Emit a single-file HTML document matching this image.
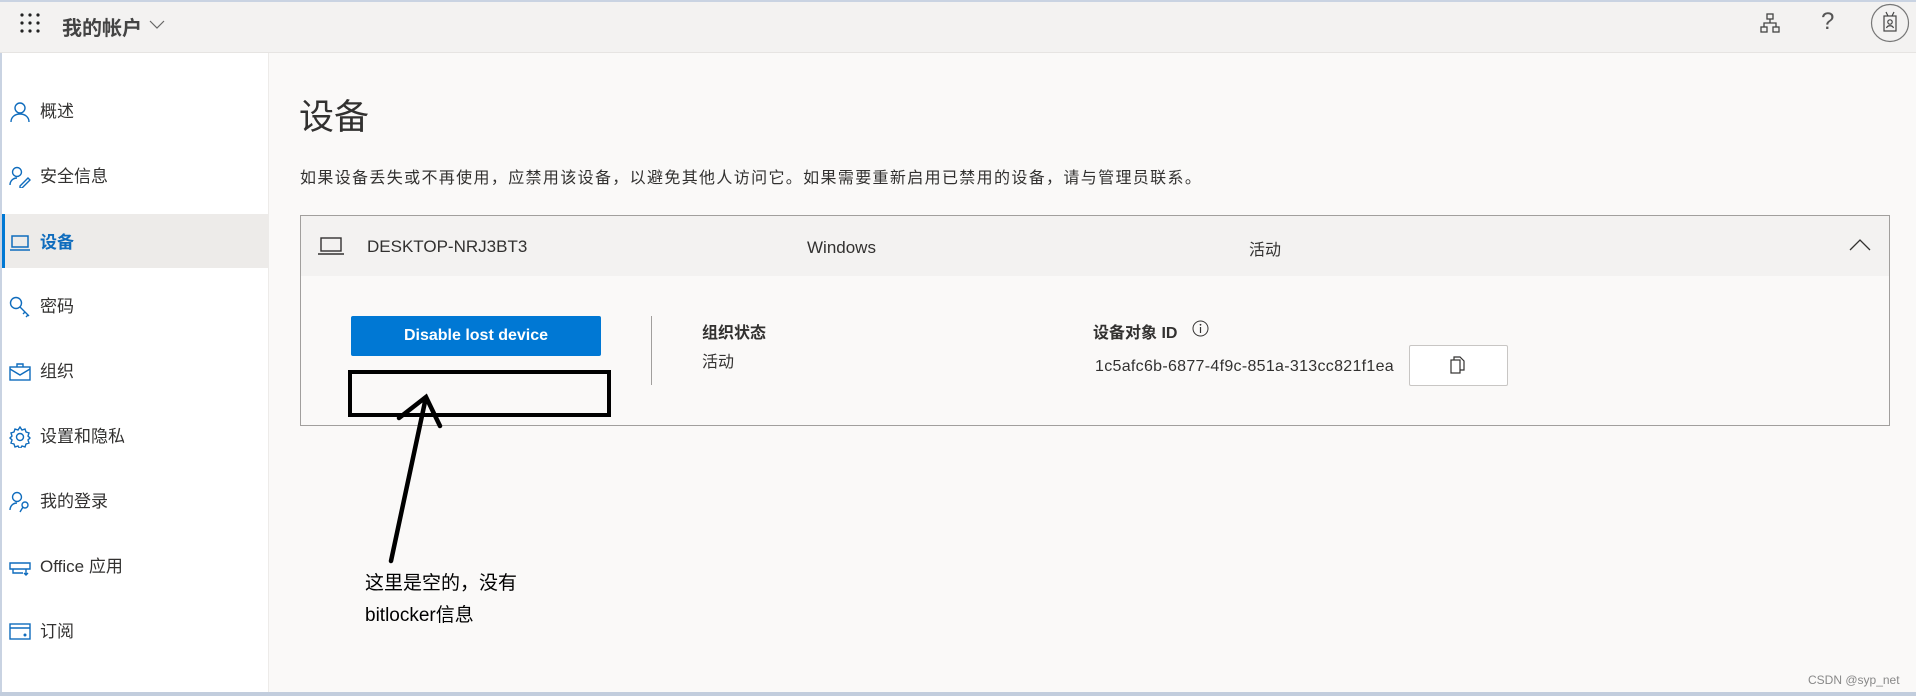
<!DOCTYPE html>
<html><head><meta charset="utf-8"><style>
*{margin:0;padding:0;box-sizing:border-box}
body{width:1916px;height:696px;overflow:hidden;background:#faf9f8;font-family:"Liberation Sans","Noto Sans CJK SC",sans-serif;color:#323130;position:relative}
.a{position:absolute}
.top{left:0;top:0;width:1916px;height:53px;background:#f3f2f1;border-top:2px solid #c9d3e2;border-bottom:1px solid #e6e4e2}
.side{left:0;top:53px;width:269px;height:639px;background:#fff;border-right:1px solid #edebe9;border-left:2px solid #c9d3e2}
.mi{position:absolute;left:40px;font-size:17px;line-height:20px;color:#323130;white-space:nowrap}
.ic{position:absolute;left:9px}
</style></head><body>
<div class="a top"></div>
<svg class="a" style="left:19px;top:12px" width="22" height="22"><g fill="#222"><circle cx="3" cy="3" r="1.6"/><circle cx="11" cy="3" r="1.6"/><circle cx="19" cy="3" r="1.6"/><circle cx="3" cy="11" r="1.6"/><circle cx="11" cy="11" r="1.6"/><circle cx="19" cy="11" r="1.6"/><circle cx="3" cy="19" r="1.6"/><circle cx="11" cy="19" r="1.6"/><circle cx="19" cy="19" r="1.6"/></g></svg>
<div class="a" style="left:62px;top:12px;font-size:20px;font-weight:bold;color:#444">我的帐户</div>
<svg class="a" style="left:149px;top:20px" width="16" height="10"><path d="M1 1l7 7 7-7" fill="none" stroke="#666" stroke-width="1.2"/></svg>
<svg class="a" style="left:1760px;top:13px" width="20" height="20"><g fill="none" stroke="#444" stroke-width="1.3"><rect x="7" y="1" width="6" height="5"/><rect x="1" y="14" width="6" height="5"/><rect x="13" y="14" width="6" height="5"/><path d="M10 6v4M4 14v-4h12v4"/></g></svg>
<div class="a" style="left:1821px;top:8px;font-size:24px;color:#555">?</div>
<svg class="a" style="left:1870px;top:3px" width="40" height="40"><circle cx="20" cy="20" r="18.5" fill="none" stroke="#777" stroke-width="1.2"/><g fill="none" stroke="#444" stroke-width="1.2"><rect x="14" y="13" width="12" height="15"/><path d="M16 9l2 4M24 9l-2 4"/><circle cx="20" cy="19" r="2.2"/><path d="M16.5 25c1-3 6-3 7 0"/></g></svg>

<div class="a side"></div>
<div class="a" style="left:2px;top:214px;width:267px;height:54px;background:#edebe9;border-left:3px solid #0078d4"></div>
<svg class="ic a" style="top:101px" width="22" height="22"><g fill="none" stroke="#0f6cbd" stroke-width="1.4"><circle cx="11" cy="7" r="5"/><path d="M2 21c0-5 4-8 9-8s9 3 9 8"/></g></svg>
<div class="mi" style="top:102px">概述</div>
<svg class="ic a" style="top:166px" width="22" height="22"><g fill="none" stroke="#0f6cbd" stroke-width="1.4"><circle cx="8" cy="6" r="4.5"/><path d="M1 19c0-4 3-7 7-7M11 20l8-8 2 2-8 8h-2z"/></g></svg>
<div class="mi" style="top:167px">安全信息</div>
<svg class="ic a" style="top:232px" width="22" height="22"><g fill="none" stroke="#0f6cbd" stroke-width="1.5"><rect x="3" y="4" width="16" height="11"/><path d="M1 18h20"/></g></svg>
<div class="mi" style="top:233px;font-weight:bold;color:#0f6cbd">设备</div>
<svg class="ic a" style="top:296px" width="22" height="22"><g fill="none" stroke="#0f6cbd" stroke-width="1.4"><circle cx="7" cy="7" r="5.5"/><path d="M11 11l9 9M16 16l-2 2M19 19l-2 2"/></g></svg>
<div class="mi" style="top:297px">密码</div>
<svg class="ic a" style="top:361px" width="22" height="22"><g fill="none" stroke="#0f6cbd" stroke-width="1.4"><rect x="1" y="6" width="20" height="13"/><path d="M8 6V3h6v3M1 8l10 6 10-6"/></g></svg>
<div class="mi" style="top:362px">组织</div>
<svg class="ic a" style="top:426px" width="22" height="22"><g fill="none" stroke="#0f6cbd" stroke-width="1.4"><circle cx="11" cy="11" r="3.5"/><path d="M11 1l2 3 3-1 1 3 3 1-1 3 2 2-2 2 1 3-3 1-1 3-3-1-2 3-2-3-3 1-1-3-3-1 1-3-2-2 2-2-1-3 3-1 1-3 3 1z"/></g></svg>
<div class="mi" style="top:427px">设置和隐私</div>
<svg class="ic a" style="top:491px" width="22" height="22"><g fill="none" stroke="#0f6cbd" stroke-width="1.4"><circle cx="8" cy="6" r="4.5"/><path d="M1 19c0-4 3-7 7-7"/><circle cx="16" cy="14" r="3"/><path d="M14 16l-3 5"/></g></svg>
<div class="mi" style="top:492px">我的登录</div>
<svg class="ic a" style="top:556px" width="22" height="22"><g fill="none" stroke="#0f6cbd" stroke-width="1.4"><path d="M1 7h20v6H1zM4 13v4h10M17 13v6M15 17l2 2 2-2"/></g></svg>
<div class="mi" style="top:557px">Office 应用</div>
<svg class="ic a" style="top:621px" width="22" height="22"><g fill="none" stroke="#0f6cbd" stroke-width="1.4"><rect x="1" y="3" width="20" height="15"/><path d="M1 7h20"/><circle cx="16" cy="14" r="0.8" fill="#0f6cbd"/></g></svg>
<div class="mi" style="top:622px">订阅</div>

<div class="a" style="left:299px;top:89px;font-size:35px;color:#323130">设备</div>
<div class="a" style="left:300px;top:164px;font-size:16px;white-space:nowrap;letter-spacing:1.35px">如果设备丢失或不再使用，应禁用该设备，以避免其他人访问它。如果需要重新启用已禁用的设备，请与管理员联系。</div>

<div class="a" style="left:300px;top:215px;width:1590px;height:211px;border:1px solid #a19f9d;background:#faf9f8"></div>
<div class="a" style="left:301px;top:216px;width:1588px;height:60px;background:#f3f2f1"></div>
<svg class="a" style="left:317px;top:235px" width="28" height="22"><g fill="none" stroke="#323130" stroke-width="1.4"><rect x="4" y="3" width="20" height="13"/><path d="M1 19h26"/></g></svg>
<div class="a" style="left:367px;top:237px;font-size:17px">DESKTOP-NRJ3BT3</div>
<div class="a" style="left:807px;top:238px;font-size:17px">Windows</div>
<div class="a" style="left:1249px;top:236px;font-size:16px">活动</div>
<svg class="a" style="left:1849px;top:239px" width="22" height="12"><path d="M1 11L11 1l10 10" fill="none" stroke="#323130" stroke-width="1.3"/></svg>

<div class="a" style="left:351px;top:316px;width:250px;height:40px;background:#0078d4;border-radius:2px;color:#fff;font-size:16px;font-weight:bold;text-align:center;line-height:40px">Disable lost device</div>
<div class="a" style="left:348px;top:370px;width:263px;height:47px;border:4.5px solid #000"></div>
<div class="a" style="left:651px;top:316px;width:1px;height:69px;background:#a19f9d"></div>
<div class="a" style="left:702px;top:319px;font-size:16px;font-weight:bold">组织状态</div>
<div class="a" style="left:702px;top:348px;font-size:16px">活动</div>
<div class="a" style="left:1093px;top:319px;font-size:16px;font-weight:bold">设备对象 ID</div>
<svg class="a" style="left:1192px;top:320px" width="17" height="17"><circle cx="8.5" cy="8.5" r="7.5" fill="none" stroke="#323130" stroke-width="1"/><path d="M8.5 7v6" stroke="#323130" stroke-width="1.2"/><circle cx="8.5" cy="4.8" r="0.9" fill="#323130"/></svg>
<div class="a" style="left:1095px;top:358px;font-size:16px;letter-spacing:0.3px">1c5afc6b-6877-4f9c-851a-313cc821f1ea</div>
<div class="a" style="left:1409px;top:345px;width:99px;height:41px;background:#fff;border:1px solid #c8c6c4;border-radius:2px"></div>
<svg class="a" style="left:1450px;top:356px" width="16" height="18"><g fill="none" stroke="#323130" stroke-width="1.2"><path d="M4 4V1h6l4 4v9h-4"/><rect x="1" y="4" width="9" height="13"/></g></svg>

<svg class="a" style="left:0;top:0" width="1916" height="696"><g stroke="#000" stroke-width="4.5" fill="none" stroke-linecap="round"><path d="M391 561L426 397M399 418L426 397 440 426"/></g></svg>
<div class="a" style="left:365px;top:568px;font-size:19px;line-height:32px;color:#000">这里是空的，没有<br>bitlocker信息</div>

<div class="a" style="left:1808px;top:673px;font-size:12px;color:#888">CSDN @syp_net</div>
<div class="a" style="left:0;top:692px;width:1916px;height:4px;background:#c2cddd"></div>
</body></html>
